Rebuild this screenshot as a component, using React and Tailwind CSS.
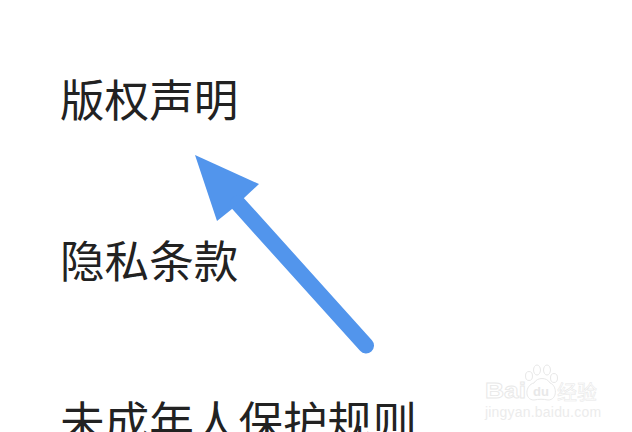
import React from 'react'

const rows = ['版权声明', '隐私条款', '未成年人保护规则']

const Arrow = () => (
  <svg className="absolute left-0 top-0" width="632" height="432" viewBox="0 0 632 432">
    <path d="M195 155 L259 184 L244 198 L232 209 L217 221 Z" fill="#5295ec" />
    <path d="M238 203.5 L366 345.5" stroke="#5295ec" strokeWidth="16" strokeLinecap="round" fill="none" />
  </svg>
)

const Watermark = () => (
  <div className="absolute left-[485px] top-[364px] w-[115px] h-[56px] text-[#ececec] [font-family:'Liberation_Sans',sans-serif]">
    <svg className="absolute left-0 top-0" width="115" height="56" viewBox="0 0 115 56" fill="none" stroke="#e8e8e8" strokeWidth="1">
      <ellipse cx="44" cy="12" rx="3.5" ry="4.5" />
      <ellipse cx="52" cy="6" rx="3.5" ry="5" />
      <ellipse cx="62" cy="6" rx="3.5" ry="5" />
      <ellipse cx="69" cy="14" rx="3.5" ry="4.5" />
      <path d="M49 19 C52 13 62 13 65 19 C72 21 73 36 63 36 C58 35 54 35 49 36 C39 36 40 21 49 19 Z" />
    </svg>
    <span className="absolute left-0 top-[15px] origin-left scale-x-[1.2] text-[22px] leading-[24px] font-bold text-transparent [-webkit-text-stroke:0.8px_#e8e8e8]">Bai</span>
    <span className="absolute left-[48px] top-[21px] text-[13px] leading-[14px] font-bold text-[#e8e8e8]">du</span>
    <span className="absolute left-[72px] top-[16px] text-[20px] leading-[24px] text-transparent [-webkit-text-stroke:0.5px_#e6e6e6] [font-family:'Noto_Sans_CJK_SC',sans-serif]">经验</span>
    <span className="absolute left-0 top-[40px] text-[14px] leading-[16px] tracking-[0.2px] text-[#ececec]">jingyan.baidu.com</span>
  </div>
)

export default function App() {
  return (
    <div className="relative w-[632px] h-[432px] overflow-hidden bg-white">
      <div className="flex flex-col gap-[99px] pl-[60px] pt-[67px] text-[44.6px] leading-[62px] text-[#222] whitespace-nowrap [font-family:'Noto_Sans_CJK_SC',sans-serif]">
        {rows.map(row => (
          <div key={row}>{row}</div>
        ))}
      </div>
      <Arrow />
      <Watermark />
    </div>
  )
}
